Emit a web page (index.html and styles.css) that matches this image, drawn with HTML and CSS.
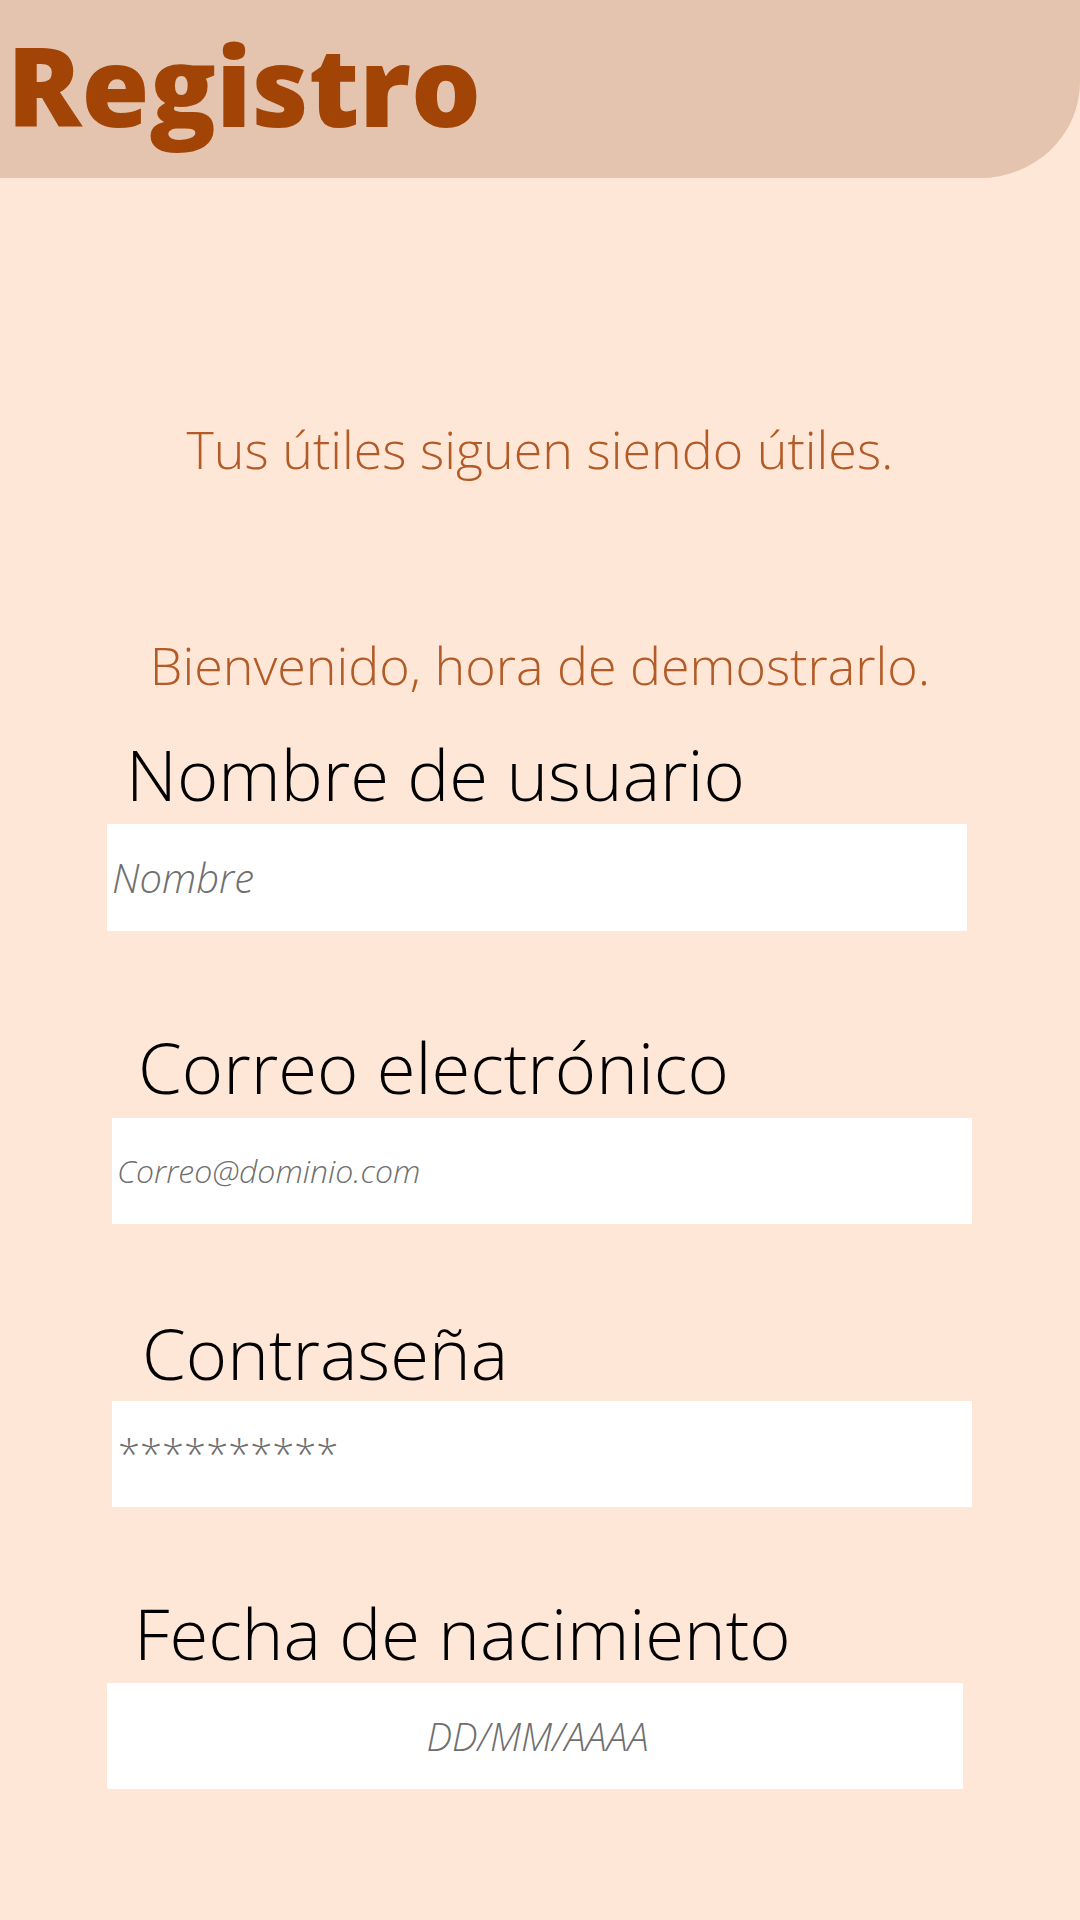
FILE: index.html
```html
<!DOCTYPE html>
<html lang="es">
<head>
<meta charset="utf-8">
<title>Registro</title>
<link rel="stylesheet" href="styles.css">
</head>
<body>
<header class="top-bar">
  <h1 class="title">Registro</h1>
</header>
<main class="content">
  <p class="tagline tagline--first">Tus útiles siguen siendo útiles.</p>
  <p class="tagline tagline--second">Bienvenido, hora de demostrarlo.</p>
  <form class="form">
    <div class="field field--name">
      <label class="field-label" for="nombre">Nombre de usuario</label>
      <input class="field-input" id="nombre" type="text" placeholder="Nombre">
    </div>
    <div class="field field--mail">
      <label class="field-label" for="correo">Correo electrónico</label>
      <input class="field-input field-input--small" id="correo" type="email" placeholder="Correo@dominio.com">
    </div>
    <div class="field field--pass">
      <label class="field-label" for="pass">Contraseña</label>
      <input class="field-input field-input--pass" id="pass" type="text" placeholder="**********">
    </div>
    <div class="field field--date">
      <label class="field-label" for="fecha">Fecha de nacimiento</label>
      <input class="field-input field-input--center" id="fecha" type="text" placeholder="DD/MM/AAAA">
    </div>
  </form>
</main>
</body>
</html>
```
FILE: styles.css
```css
* { box-sizing: border-box; }
html, body {
  margin: 0;
  padding: 0;
}
body {
  background: #ffe7d7;
  font-family: "Open Sans", "Noto Sans", sans-serif;
  width: 1080px;
  min-height: 1920px;
}
.top-bar {
  height: 178px;
  background: #e4c4ae;
  border-bottom-right-radius: 100px 96px;
  padding: 29px 0 0 7px;
}
.title {
  margin: 0;
  font-size: 110px;
  line-height: 110px;
  font-weight: 800;
  color: #a14406;
  letter-spacing: 0;
}
.content {
  display: flex;
  flex-direction: column;
}
.tagline {
  margin: 0;
  text-align: center;
  font-size: 52px;
  line-height: 62.4px;
  font-weight: 300;
  color: #b35b26;
}
.tagline--first { margin-top: 240px; }
.tagline--second { margin-top: 154px; }
.form {
  display: flex;
  flex-direction: column;
  margin-top: 35px;
}
.field {
  display: flex;
  flex-direction: column;
  align-items: flex-start;
}
.field-label {
  font-size: 70.6px;
  line-height: 84px;
  font-weight: 300;
  color: #000;
}
.field-input {
  width: 860px;
  height: 107px;
  border: 0;
  outline: 0;
  background: #fff;
  padding: 0 0 0 5px;
  font-family: "Open Sans", "Noto Sans", sans-serif;
  font-size: 40px;
  font-weight: 300;
  font-style: italic;
  color: #6f6f6f;
}
.field-input::placeholder {
  color: #6f6f6f;
  opacity: 1;
}
.field-input--small { font-size: 32px; height: 106px; }
.field-input--pass { font-size: 40px; font-style: normal; padding-left: 6px; height: 106px; }
.field-input--center { text-align: center; font-size: 38px; height: 106px; }

.field--name { margin-left: 107px; }
.field--name .field-label { margin-left: 19px; margin-bottom: 8px; }

.field--mail { margin-left: 112px; margin-top: 94px; }
.field--mail .field-label { margin-left: 26px; margin-bottom: 9px; }

.field--pass { margin-left: 112px; margin-top: 87px; }
.field--pass .field-label { margin-left: 30px; margin-bottom: 6px; }

.field--date { margin-left: 107px; margin-top: 84px; }
.field--date .field-label { margin-left: 27px; margin-bottom: 8px; }
.field--date .field-input { width: 856px; }
```
